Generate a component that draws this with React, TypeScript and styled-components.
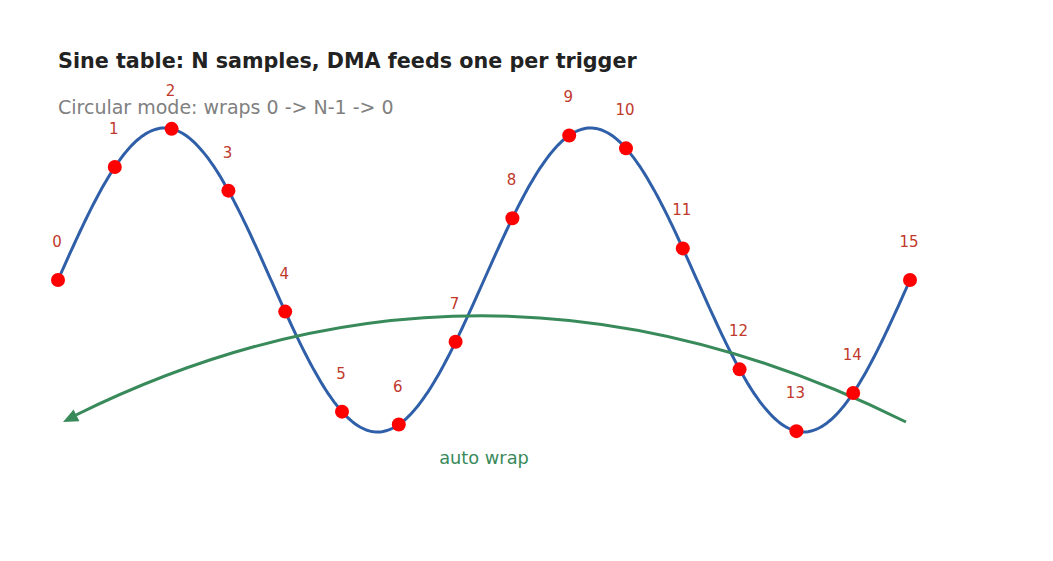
import styled, { createGlobalStyle } from "styled-components";

const GlobalStyle = createGlobalStyle`
  html, body {
    margin: 0;
    padding: 0;
    background: #ffffff;
  }
  body {
    font-family: "DejaVu Sans", "Liberation Sans", sans-serif;
  }
`;

const W = 1053;
const H = 561;

const Figure = styled.div`
  position: relative;
  width: ${W}px;
  height: ${H}px;
  overflow: hidden;
  background: #ffffff;
`;

const Header = styled.header`
  position: relative;
  z-index: 1;
  display: flex;
  flex-direction: column;
  gap: 21px;
  padding: 48px 0 0 58px;
`;

const Title = styled.h1`
  margin: 0;
  font-size: 20.7px;
  line-height: 26px;
  font-weight: bold;
  color: #222222;
`;

const Subtitle = styled.p`
  margin: 0;
  font-size: 19px;
  line-height: 24px;
  color: #808080;
`;

const Chart = styled.svg`
  position: absolute;
  inset: 0;
`;

const Label = styled.text<{ $tone?: "red" | "green" }>`
  font-family: "DejaVu Sans", "Liberation Sans", sans-serif;
  font-size: ${(p) => (p.$tone === "green" ? "17.8px" : "15px")};
  fill: ${(p) => (p.$tone === "green" ? "#388a5a" : "#c0392b")};
  text-anchor: middle;
  dominant-baseline: central;
`;

// two full periods from x0 to x1, 16 samples
const x0 = 58;
const x1 = 910;
const mid = 280;
const amp = 152;
const N = 16;

const yAt = (x: number) =>
  mid - amp * Math.sin((4 * Math.PI * (x - x0)) / (x1 - x0));

const curve = (() => {
  const pts: string[] = [];
  for (let x = x0; x <= x1; x += 2) {
    pts.push(`${x.toFixed(1)},${yAt(x).toFixed(1)}`);
  }
  return "M" + pts.join(" L");
})();

const samples = Array.from({ length: N }, (_, i) => {
  const x = x0 + ((x1 - x0) * i) / (N - 1);
  return { i, x, y: yAt(x) };
});

export default function App() {
  return (
    <>
      <GlobalStyle />
      <Figure>
        <Chart width={W} height={H} viewBox={`0 0 ${W} ${H}`}>
          <path d={curve} fill="none" stroke="#2f5fa8" strokeWidth={3} />
          <path
            d="M906,422 Q485,213 76,415"
            fill="none"
            stroke="#388a5a"
            strokeWidth={3}
          />
          <polygon points="63,422 79.4,421.2 73.6,409.6" fill="#388a5a" />
          {samples.map((s) => (
            <g key={s.i}>
              <circle cx={s.x} cy={s.y} r={7} fill="#ff0000" />
              <Label x={s.x - 1} y={s.y - 38}>
                {s.i}
              </Label>
            </g>
          ))}
          <Label $tone="green" x={484} y={457}>
            auto wrap
          </Label>
        </Chart>
        <Header>
          <Title>Sine table: N samples, DMA feeds one per trigger</Title>
          <Subtitle>Circular mode: wraps 0 -&gt; N-1 -&gt; 0</Subtitle>
        </Header>
      </Figure>
    </>
  );
}
